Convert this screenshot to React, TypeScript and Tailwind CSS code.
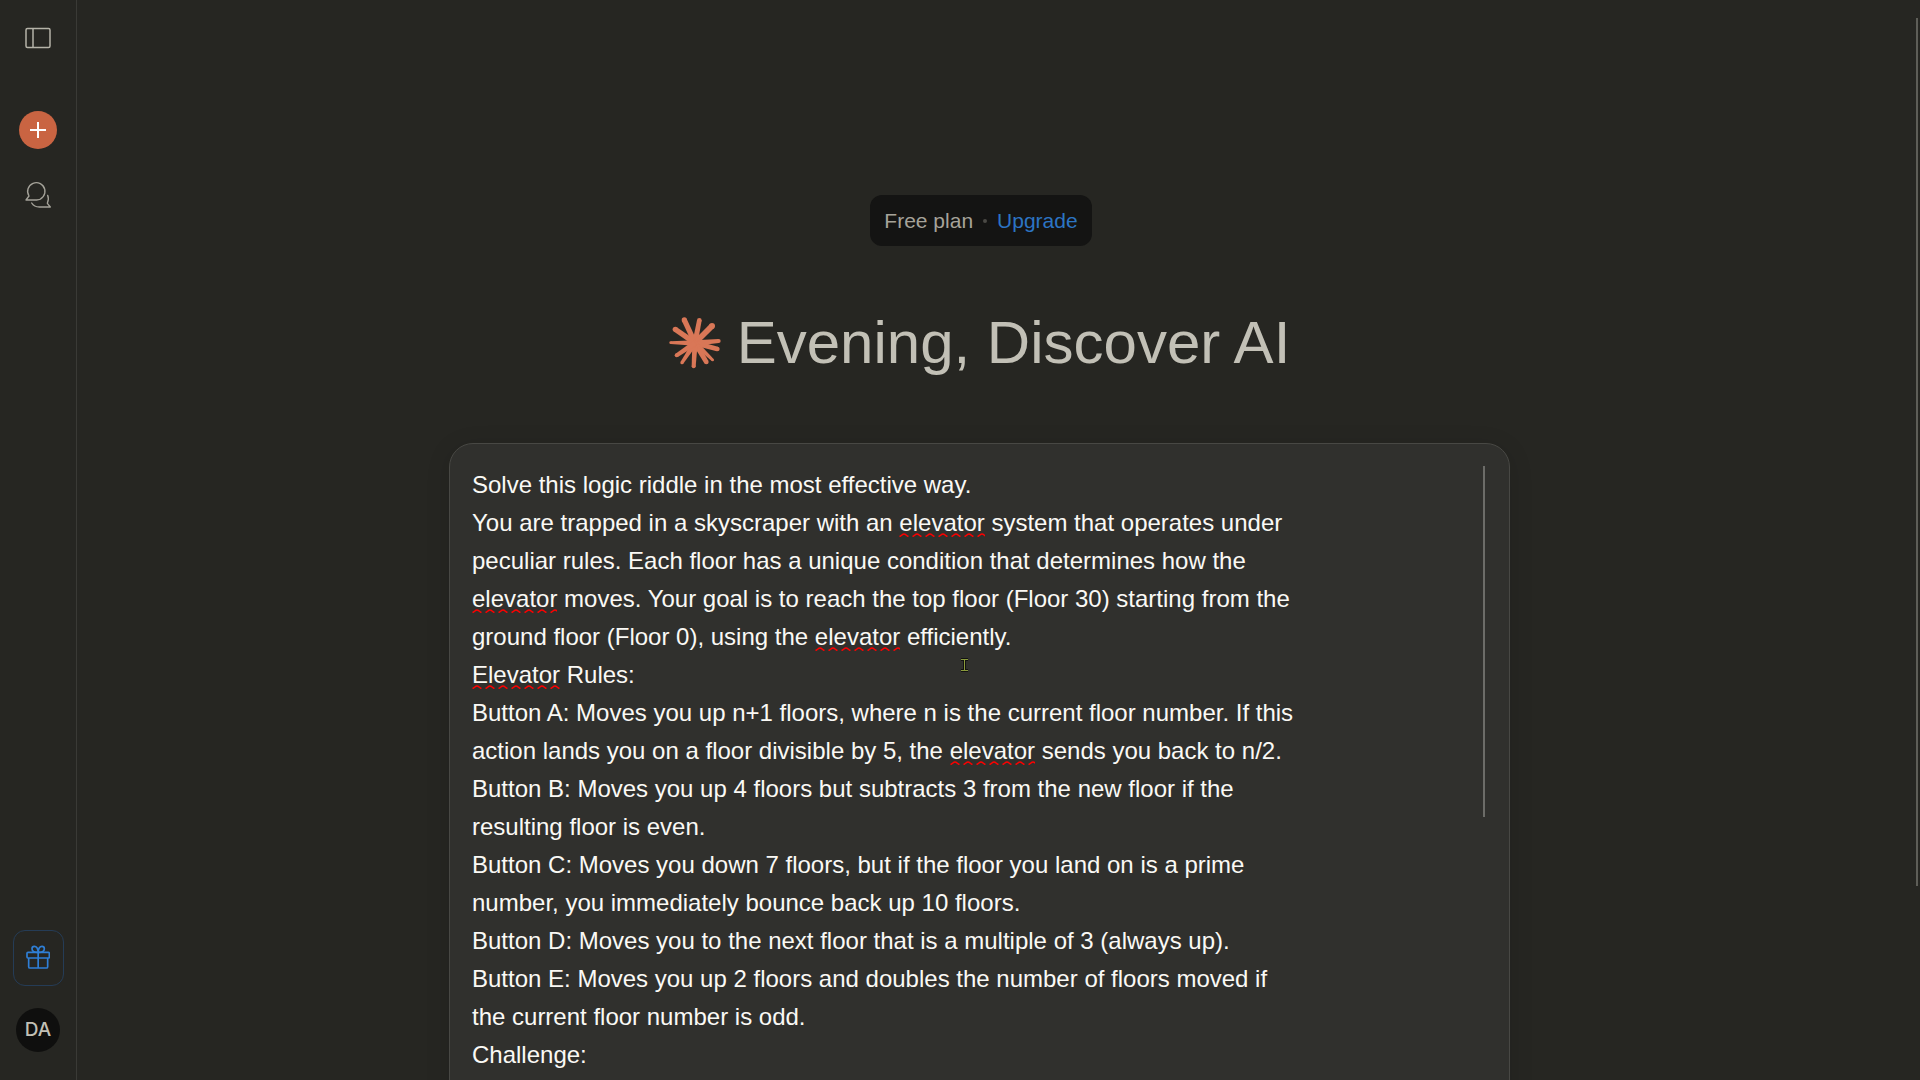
import React from "react";

const RAYS: [number, number, number][] = [
  [126, 86, 8],
  [171, 87, 7],
  [209, 104, 9],
  [99, 114, 8],
  [85, 154, 4],
  [229, 149, 6],
  [225, 173, 7],
  [211, 206, 4],
  [192, 212, 7],
  [154, 225, 6],
  [119, 214, 5],
  [103, 192, 6],
];

function Burst() {
  const cx = 158;
  const cy = 155;
  return (
    <svg viewBox="80 77 156 156" className="size-[52px] shrink-0 fill-[#d97757]" aria-hidden="true">
      <circle cx={cx} cy={cy} r="22" />
      {RAYS.map(([x, y, r]) => {
        const len = Math.hypot(x - cx, y - cy);
        const nx = -(y - cy) / len;
        const ny = (x - cx) / len;
        const points = [
          [cx + nx * 8, cy + ny * 8],
          [x + nx * r, y + ny * r],
          [x - nx * r, y - ny * r],
          [cx - nx * 8, cy - ny * 8],
        ]
          .map((p) => p.join(","))
          .join(" ");
        return (
          <g key={`${x}-${y}`}>
            <polygon points={points} />
            <circle cx={x} cy={y} r={r} />
          </g>
        );
      })}
    </svg>
  );
}

function PanelIcon() {
  return (
    <svg width="26" height="22" viewBox="0 0 26 22" fill="none" stroke="#b5b3a8" strokeWidth="1.5" aria-hidden="true">
      <rect x="1" y="1.5" width="24" height="19" rx="1.5" />
      <path d="M8 1.5v19" />
    </svg>
  );
}

function ChatsIcon() {
  return (
    <svg width="28" height="28" viewBox="0 0 84 84" fill="none" stroke="#a5a39a" strokeWidth="4" strokeLinejoin="round" strokeLinecap="round" aria-hidden="true">
      <path d="M6 57 L15 45 A26 26 0 1 1 38 57 Z" />
      <path d="M23 66 C28 74 36 78 46 78 H79 L70 67 C74 58 74 50 71 43" />
    </svg>
  );
}

function GiftIcon() {
  return (
    <svg width="24" height="24" viewBox="0 0 72 72" fill="none" stroke="#2f7fd6" strokeWidth="5" strokeLinejoin="round" aria-hidden="true">
      <rect x="3" y="22" width="67" height="17" rx="3" />
      <path d="M8 39v26q0 4 4 4h49q4 0 4-4V39M36.500 22v47" />
      <path d="M36.500 22C25 22 18 18 18 11c0-4 3-7 7-7 7 0 11 8 11.500 18ZM36.500 22C48 22 55 18 55 11c0-4-3-7-7-7-7 0-11 8-11.500 18Z" />
    </svg>
  );
}

function Misspelled({ children }: { children: React.ReactNode }) {
  return (
    <span className="bg-[url('data:image/svg+xml,%3Csvg%20xmlns=%22http://www.w3.org/2000/svg%22%20width=%2213%22%20height=%224%22%3E%3Cpath%20d=%22M0.500%203.500C3%203%203%201%205%201S7%203%209.500%203.500%22%20fill=%22none%22%20stroke=%22red%22%20stroke-width=%221.500%22/%3E%3C/svg%3E')] bg-bottom-left bg-repeat-x pb-px">
      {children}
    </span>
  );
}

function Sidebar() {
  return (
    <aside className="flex w-[77px] shrink-0 flex-col items-center border-r border-[#3a3a36] pt-[18px] pb-7">
      <button type="button" aria-label="Open sidebar" className="flex size-10 items-center justify-center">
        <PanelIcon />
      </button>
      <button type="button" aria-label="New chat" className="mt-[53px] flex size-[38px] items-center justify-center rounded-full bg-[#c96442]">
        <svg width="16" height="16" viewBox="0 0 16 16" stroke="#ffffff" strokeWidth="2" aria-hidden="true">
          <path d="M8 0v16M0 8h16" />
        </svg>
      </button>
      <button type="button" aria-label="Chats" className="mt-[26px] flex size-10 items-center justify-center">
        <ChatsIcon />
      </button>
      <button type="button" aria-label="Gifts" className="mt-auto flex h-14 w-[51px] items-center justify-center rounded-xl border border-[#253c56] pb-0.5">
        <GiftIcon />
      </button>
      <button type="button" className="mt-[22px] flex size-11 items-center justify-center rounded-full bg-[#0f0f0e] font-[Inter,sans-serif] text-[19px] font-medium text-[#c2c0b6]">
        DA
      </button>
    </aside>
  );
}

export default function App() {
  return (
    <div className="relative flex h-screen overflow-hidden bg-[#262622] font-['Liberation_Sans',Arial,sans-serif]">
      <Sidebar />
      <main className="flex min-w-0 flex-1 flex-col items-center pt-[195px] pr-[38px]">
        <div className="ml-[3px] flex h-[51px] shrink-0 items-center gap-2.5 rounded-xl bg-[#141413] px-3.5 text-[21px] text-[#a6a39a]">
          <span>Free plan</span>
          <span className="size-1 rounded-full bg-[#4a4945]" />
          <a href="#upgrade" className="text-[#2c74c4]">
            Upgrade
          </a>
        </div>
        <h1 className="mt-[61px] flex h-[72px] shrink-0 items-center gap-4 text-[60px] leading-[72px] whitespace-nowrap text-[#c2c0b6]">
          <Burst />
          <span>Evening, Discover AI</span>
        </h1>
        <div className="mt-16 flex w-full max-w-[1061px] shrink-0 items-start justify-between rounded-3xl border border-[#484844] bg-[#30302d] pt-[22px] pr-6 pb-24 pl-[22px] shadow-[0_4px_24px_rgba(0,0,0,0.12)]">
          <div
            role="textbox"
            aria-multiline="true"
            aria-label="Message"
            contentEditable
            suppressContentEditableWarning
            spellCheck={false}
            className="max-w-[832px] text-[24px] leading-[38px] text-[#faf9f5] outline-none"
          >
            <p>Solve this logic riddle in the most effective way.</p>
            <p>
              You are trapped in a skyscraper with an <Misspelled>elevator</Misspelled> system that operates under peculiar
              rules. Each floor has a unique condition that determines how the <Misspelled>elevator</Misspelled> moves. Your
              goal is to reach the top floor (Floor 30) starting from the ground floor (Floor 0), using the{" "}
              <Misspelled>elevator</Misspelled> efficiently.
            </p>
            <p>
              <Misspelled>Elevator</Misspelled> Rules:
            </p>
            <p>
              Button A: Moves you up n+1 floors, where n is the current floor number. If this action lands you on a floor
              divisible by 5, the <Misspelled>elevator</Misspelled> sends you back to n/2.
            </p>
            <p>Button B: Moves you up 4 floors but subtracts 3 from the new floor if the resulting floor is even.</p>
            <p>
              Button C: Moves you down 7 floors, but if the floor you land on is a prime number, you immediately bounce back
              up 10 floors.
            </p>
            <p>Button D: Moves you to the next floor that is a multiple of 3 (always up).</p>
            <p>Button E: Moves you up 2 floors and doubles the number of floors moved if the current floor number is odd.</p>
            <p>Challenge:</p>
          </div>
          <div className="h-[351px] w-0.5 bg-[#6c6c68]" />
        </div>
      </main>
      <div className="absolute top-[18px] right-0.5 h-[868px] w-0.5 bg-[#5e5e58]" />
      <svg className="absolute top-[658px] left-[960px]" width="9" height="14" viewBox="0 0 9 14" fill="none" aria-hidden="true">
        <path d="M1 1.500h7M1 12.500h7M4.500 1v12" stroke="#111110" strokeWidth="3" />
        <path d="M1 1.500h7M1 12.500h7M4.500 1v12" stroke="#8a9a3c" />
      </svg>
    </div>
  );
}
